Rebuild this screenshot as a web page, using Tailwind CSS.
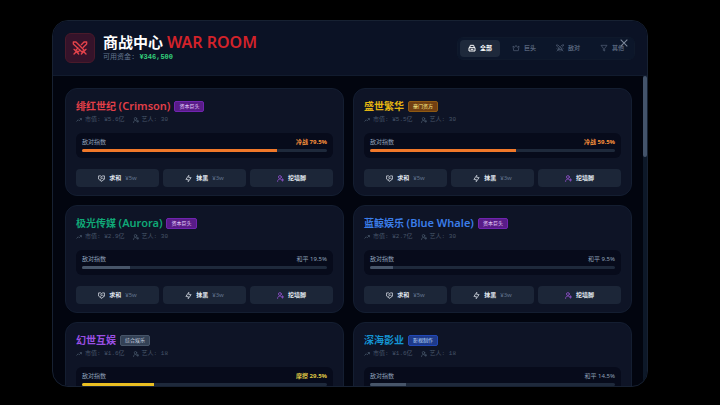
<!DOCTYPE html>
<html lang="zh-CN">

<head>
  <meta charset="UTF-8" />
  <meta name="viewport" content="width=device-width, initial-scale=1.0" />
  <title>商战中心 WAR ROOM</title>
  <script src="https://cdn.jsdelivr.net/npm/@tailwindcss/browser@4"></script>
</head>

<body class="bg-black font-['Noto_Sans','Noto_Sans_CJK_SC',sans-serif]">
  <!-- Icons -->
  <svg class="hidden">
    <symbol id="swords" viewBox="0 0 24 24" stroke-width="2" stroke-linecap="round" stroke-linejoin="round">
      <path d="M2 3h4l12 12-3 3L2 6zM22 3h-4l-4 4M22 3v3l-5 5M9 12l-3 3 3 3 3-3M3 14l7 7M21 14l-7 7M6 18l-3 3M18 18l3 3" />
    </symbol>
    <symbol id="building" viewBox="0 0 24 24" stroke-width="3" stroke-linejoin="round">
      <path d="M3 11h18v10H3zM5 11l2-7h10l2 7M8 16h8" />
    </symbol>
    <symbol id="crown" viewBox="0 0 24 24" stroke-width="2" stroke-linejoin="round">
      <path d="M5 20h14l2-14-5 4-4-6-4 6-5-4z" />
    </symbol>
    <symbol id="filter" viewBox="0 0 24 24" stroke-width="2" stroke-linejoin="round">
      <path d="M3 4h18l-7 9v8l-4-2v-6z" />
    </symbol>
    <symbol id="close" viewBox="0 0 24 24" stroke-width="2.5">
      <path d="M4 4l16 16M20 4 4 20" />
    </symbol>
    <symbol id="trend" viewBox="0 0 24 24" stroke-width="3">
      <path d="M2 18l7-7 4 4 8-8M15 6h7v7" />
    </symbol>
    <symbol id="user" viewBox="0 0 24 24" stroke-width="3" stroke-linecap="round">
      <circle cx="10" cy="7" r="5" />
      <path d="M2 22c0-5 3-8 8-8 2 0 4 1 5 2M19 13v8M15 17h8" />
    </symbol>
    <symbol id="handshake" viewBox="0 0 24 24" stroke-width="2.5" stroke-linejoin="round">
      <path d="M12 5 9 3H2v11l10 8 10-8V3h-6l-7 6 2 3 4-2 6 6M8 15l4 3" />
    </symbol>
    <symbol id="flash" viewBox="0 0 24 24" stroke-width="2.5" stroke-linejoin="round">
      <path d="M13 9h8L11 23v-8H3L13 1z" />
    </symbol>
  </svg>

  <div class="h-screen flex pl-[52px] pr-[72px] pt-5 pb-[18px]">
    <div class="relative flex-1 min-w-0 flex flex-col overflow-hidden rounded-2xl border border-[#172132] bg-[#02050f]">

      <!-- Header -->
      <header class="shrink-0 flex items-center justify-between h-[55px] px-3 border-b border-[#111b2e] bg-[#0b1225]">
        <div class="flex items-center gap-2">
          <div class="size-[30px] flex items-center justify-center rounded-md border border-[#4a1a2a] bg-[#35132a] text-[#e5434b]">
            <svg class="size-4 fill-none stroke-current"><use href="#swords" /></svg>
          </div>
          <div class="pb-[2px]">
            <h1 class="text-[15px] leading-5 font-bold text-white">商战中心 <span class="text-[16px] font-semibold text-[#d3222a]">WAR ROOM</span></h1>
            <p class="text-[7px] leading-[10px] text-slate-500 font-['Liberation_Mono','Noto_Sans_CJK_SC',monospace]">可用资金: <span class="font-bold text-[#34d17c]">¥346,500</span></p>
          </div>
        </div>

        <nav class="flex gap-1 p-[2px] rounded-md border border-[#0f192b] bg-[#0c162a] text-[6px] leading-[8px] font-bold text-[#56637a]">
          <button type="button" class="flex items-center gap-1 h-[17px] px-2 rounded bg-[#1e293b] text-white"><svg class="size-2 fill-none stroke-current"><use href="#building" /></svg>全部</button>
          <button type="button" class="flex items-center gap-1 h-[17px] px-2 rounded"><svg class="size-2 fill-none stroke-current"><use href="#crown" /></svg>巨头</button>
          <button type="button" class="flex items-center gap-1 h-[17px] px-2 rounded"><svg class="size-2 fill-none stroke-current"><use href="#swords" /></svg>敌对</button>
          <button type="button" class="flex items-center gap-1 h-[17px] px-2 rounded"><svg class="size-2 fill-none stroke-current"><use href="#filter" /></svg>其他</button>
        </nav>
      </header>
      <button type="button" aria-label="关闭" class="absolute top-[17px] right-[18px] text-[#7d899b]"><svg class="block size-[10px] fill-none stroke-current"><use href="#close" /></svg></button>

      <!-- Company list -->
      <div class="flex-1 min-h-0 flex">
        <main id="companies" class="flex-1 min-w-0 overflow-hidden grid grid-cols-2 content-start gap-[9px] pt-3 pl-3 pr-[11px]"></main>
        <div class="w-1 bg-[#0d1828]">
          <div class="h-[81px] rounded-xs bg-[#43536a]"></div>
        </div>
      </div>
    </div>
  </div>

  <script>
    const tags = {
      giant: 'border-[#7024b0] bg-[#581c87] text-[#e9d5ff]',
      noble: 'border-[#8f5a12] bg-[#713f12] text-[#fef08a]',
      mixed: 'border-[#475569] bg-[#334155] text-[#cbd5e1]',
      film: 'border-[#2148b8] bg-[#1e3a8a] text-[#bfdbfe]',
    };
    const moods = {
      '冷战': ['text-[#fb923c] font-bold', 'bg-[#f0782a]'],
      '摩擦': ['text-[#dfc744] font-bold', 'bg-[#eabf22]'],
      '和平': ['text-slate-400', 'bg-[#475569]'],
    };
    const companies = [
      { name: '绯红世纪', alias: '(Crimson)', color: 'text-[#e23f48]', tag: '资本巨头', kind: 'giant', value: '5.6', artists: 30, mood: '冷战', hostility: 79.5 },
      { name: '盛世繁华', alias: '', color: 'text-[#e4b512]', tag: '豪门资方', kind: 'noble', value: '5.5', artists: 30, mood: '冷战', hostility: 59.5 },
      { name: '极光传媒', alias: '(Aurora)', color: 'text-[#10a877]', tag: '资本巨头', kind: 'giant', value: '2.9', artists: 30, mood: '和平', hostility: 19.5 },
      { name: '蓝鲸娱乐', alias: '(Blue Whale)', color: 'text-[#3b7de8]', tag: '资本巨头', kind: 'giant', value: '2.7', artists: 30, mood: '和平', hostility: 9.5 },
      { name: '幻世互娱', alias: '', color: 'text-[#9b50e4]', tag: '综合娱乐', kind: 'mixed', value: '1.6', artists: 18, mood: '摩擦', hostility: 29.5 },
      { name: '深海影业', alias: '', color: 'text-[#1495d3]', tag: '影视制作', kind: 'film', value: '1.6', artists: 18, mood: '和平', hostility: 14.5 },
    ];

    document.getElementById('companies').innerHTML = companies.map(c => `
      <section class="h-[108px] px-[10px] pt-[10px] rounded-xl border border-[#141e31] bg-[#0e1426]">
        <div class="flex items-center gap-1 h-[14px]">
          <h2 class="text-[10px] leading-[14px] font-bold whitespace-nowrap ${c.color}">${c.name} <span class="text-[11px] font-semibold">${c.alias}</span></h2>
          <span class="h-[11px] px-1 rounded-xs border text-[5px] leading-[9px] whitespace-nowrap ${tags[c.kind]}">${c.tag}</span>
        </div>
        <div class="flex gap-2 mt-[3px] text-[6px] leading-[8px] text-[#475569] font-['Liberation_Mono','Noto_Sans_CJK_SC',monospace]">
          <span class="flex items-center gap-[3px]"><svg class="size-[6px] fill-none stroke-current"><use href="#trend" /></svg>市值: ¥${c.value}亿</span>
          <span class="flex items-center gap-[3px]"><svg class="size-[6px] fill-none stroke-current"><use href="#user" /></svg>艺人: ${c.artists}</span>
        </div>
        <div class="mt-[9px] h-[25px] px-[6px] pt-[5px] rounded-md bg-[#070b1b]">
          <div class="flex justify-between text-[6px] leading-[8px]">
            <span class="text-slate-400">敌对指数</span>
            <span class="${moods[c.mood][0]}">${c.mood} ${c.hostility}%</span>
          </div>
          <div class="mt-[3px] h-[3px] rounded-full overflow-hidden bg-[#1e293b]">
            <div class="h-full ${moods[c.mood][1]}" style="width: ${c.hostility}%"></div>
          </div>
        </div>
        <div class="grid grid-cols-3 gap-1 mt-[11px] text-[6px] leading-[8px] text-slate-200">
          <button type="button" class="flex items-center justify-center gap-1 h-[18px] rounded-[4px] bg-[#1c2638]"><svg class="size-[7px] fill-none stroke-current"><use href="#handshake" /></svg><b>求和</b><span class="text-slate-500">¥5w</span></button>
          <button type="button" class="flex items-center justify-center gap-1 h-[18px] rounded-[4px] bg-[#1c2638]"><svg class="size-[7px] fill-none stroke-current"><use href="#flash" /></svg><b>抹黑</b><span class="text-slate-500">¥3w</span></button>
          <button type="button" class="flex items-center justify-center gap-1 h-[18px] rounded-[4px] bg-[#1c2638]"><svg class="size-[7px] fill-none stroke-[#8a4fc4]"><use href="#user" /></svg><b>挖墙脚</b></button>
        </div>
      </section>`).join('');
  </script>
</body>

</html>
